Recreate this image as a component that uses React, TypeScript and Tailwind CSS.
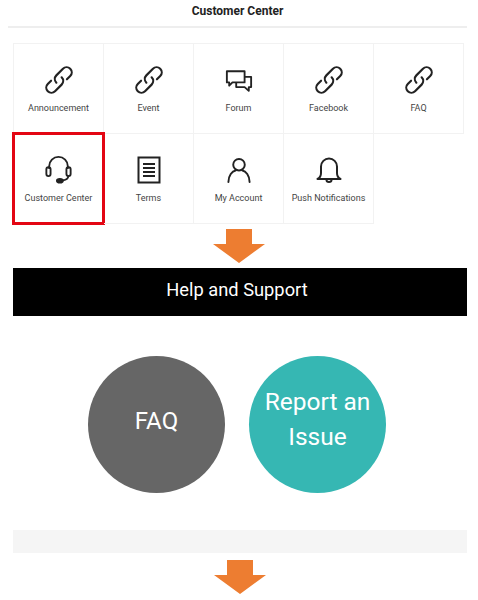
import React from "react";

const LinkIcon = () => (
  <svg width="28" height="28" viewBox="-2 -2 30 30" fill="none" stroke="#222" strokeWidth="2.300" strokeLinecap="round">
    <g transform="rotate(-45 13 13)">
      <path d="M6.500 7.500H1.500a5.500 5.500 0 0 0 0 11h10a5.500 5.500 0 0 0 5.500-5.500" />
      <path d="M19.500 18.500h5a5.500 5.500 0 0 0 0-11h-10a5.500 5.500 0 0 0-5.500 5.500" />
    </g>
  </svg>
);

const ForumIcon = () => (
  <svg width="28" height="25" viewBox="0 0 30 26" fill="none" stroke="#222" strokeWidth="2" strokeLinejoin="round">
    <path d="M2 2h19v12H8l-3.500 3.500V14H2z" />
    <path d="M21 8h7v11h-2.500v4L21 19h-9v-5" />
  </svg>
);

const HeadsetIcon = () => (
  <svg width="29" height="28" viewBox="0 0 30 30" fill="none" stroke="#222" strokeWidth="2" strokeLinecap="round">
    <path d="M5 13V11a10 10 0 0 1 20 0v2" />
    <rect x="2" y="12" width="4.500" height="9.500" rx="2.200" />
    <rect x="23.500" y="12" width="4.500" height="9.500" rx="2.200" />
    <path d="M25.500 21.500c0 3.500-3 4.500-7 4.800" />
    <ellipse cx="16.500" cy="26.500" rx="3.200" ry="2" fill="#222" />
  </svg>
);

const TermsIcon = () => (
  <svg width="24" height="28" viewBox="0 0 24 28" fill="none" stroke="#222" strokeWidth="2">
    <rect x="1.500" y="1.500" width="21" height="25" />
    <path d="M6 8h12M6 12h12M6 16h12M6 20h12" />
  </svg>
);

const UserIcon = () => (
  <svg width="26" height="27" viewBox="0 0 26 28" fill="none" stroke="#222" strokeWidth="2" strokeLinecap="round">
    <circle cx="13" cy="8" r="6" />
    <path d="M2 26c0-7 4-11.500 7.500-12M24 26c0-7-4-11.500-7.500-12" />
  </svg>
);

const BellIcon = () => (
  <svg width="26" height="28" viewBox="0 0 26 28" fill="none" stroke="#222" strokeWidth="2" strokeLinejoin="round">
    <path d="M1.500 23c3-1.500 3.500-3.500 3.500-6v-6.500a8 8 0 0 1 16 0V17c0 2.500.5 4.500 3.500 6z" />
    <path d="M10.500 24c0 2.500 5 2.500 5 0" />
  </svg>
);

const DownArrow = () => (
  <svg width="52" height="34" viewBox="0 0 52 34" className="block">
    <polygon points="13,0 39,0 39,15 52,15 26,34 0,15 13,15" fill="#ed7d31" />
  </svg>
);

const items = [
  { label: "Announcement", icon: <LinkIcon /> },
  { label: "Event", icon: <LinkIcon /> },
  { label: "Forum", icon: <ForumIcon /> },
  { label: "Facebook", icon: <LinkIcon /> },
  { label: "FAQ", icon: <LinkIcon /> },
  { label: "Customer Center", icon: <HeadsetIcon />, selected: true },
  { label: "Terms", icon: <TermsIcon /> },
  { label: "My Account", icon: <UserIcon /> },
  { label: "Push Notifications", icon: <BellIcon /> },
];

export default function App() {
  return (
    <div className="h-[600px] w-[478px] overflow-hidden bg-white font-['Roboto',sans-serif]">
      <div className="mx-2 flex h-[28px] w-[459px] items-start justify-center border-b-2 border-[#eeeeee] pt-[2px] text-[12px] font-bold text-[#222]">
        Customer Center
      </div>

      <div className="ml-[13px] mt-[15px] grid w-[451px] grid-cols-[repeat(5,90px)] border-l border-t border-[#f2f2f2]">
        {items.map((item) => (
          <div
            key={item.label}
            className="relative flex h-[90px] flex-col items-center border-b border-r border-[#f2f2f2]"
          >
            <div className="flex h-[50px] w-full items-end justify-center">{item.icon}</div>
            <span className="mt-[8px] whitespace-nowrap text-[9px] text-[#444]">{item.label}</span>
            {item.selected && <div className="absolute -inset-[2px] border-[3px] border-[#e30613]" />}
          </div>
        ))}
      </div>

      <div className="ml-[213px] mt-[5px]">
        <DownArrow />
      </div>

      <div className="ml-[13px] mr-[11px] mt-[5px] flex h-[48px] items-center justify-center bg-black pb-[5px] pr-[6px] text-[18.3px] text-white">
        Help and Support
      </div>

      <div className="ml-[88px] mt-[40px] flex gap-[24px]">
        <div className="flex h-[137px] w-[137px] items-center justify-center rounded-full bg-[#666666] pb-[8px] text-[24px] text-white">
          FAQ
        </div>
        <div className="flex h-[137px] w-[137px] items-center justify-center rounded-full bg-[#36b7b3] pb-[12px] text-center text-[24.5px] leading-[35px] text-white">
          Report an
          <br />
          Issue
        </div>
      </div>

      <div className="ml-[13px] mr-[11px] mt-[37px] h-[23px] bg-[#f5f5f5]" />

      <div className="ml-[214px] mt-[7px]">
        <DownArrow />
      </div>
    </div>
  );
}
